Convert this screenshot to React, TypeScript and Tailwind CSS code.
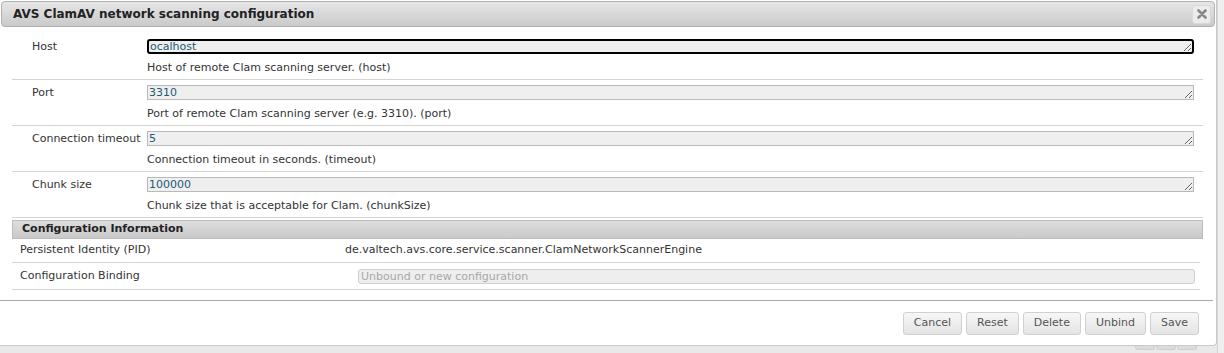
import React from "react";

interface FieldProps {
  label: string;
  value: string;
  description: string;
  focused?: boolean;
}

const fields: FieldProps[] = [
  { label: "Host", value: "localhost", description: "Host of remote Clam scanning server. (host)", focused: true },
  { label: "Port", value: "3310", description: "Port of remote Clam scanning server (e.g. 3310). (port)" },
  { label: "Connection timeout", value: "5", description: "Connection timeout in seconds. (timeout)" },
  { label: "Chunk size", value: "100000", description: "Chunk size that is acceptable for Clam. (chunkSize)" },
];

const FieldRow = ({ label, value, description, focused }: FieldProps) => {
  return (
    <div className="flex border-b border-[#d4d4d4] pt-[5px] pb-[4px]">
      <div className="w-[135px] shrink-0 pl-[20px] leading-[15px]">{label}</div>
      <div className="flex-1 pr-[9px]">
        <textarea
          readOnly
          rows={1}
          value={focused ? "ocalhost" : value}
          className={
            focused
              ? "block w-full h-[15px] rounded-[3px] border-2 border-black bg-[#efefef] px-[1px] text-[11px] leading-[11px] text-[#1d5a73] overflow-hidden resize"
              : "block w-full h-[15px] border border-[#b9b9b9] bg-[#efefef] px-[1px] text-[11px] leading-[13px] text-[#1d5a73] overflow-hidden resize"
          }
        />
        <div className="mt-[6px] leading-[15px]">{description}</div>
      </div>
    </div>
  );
};

const DialogButton = ({ label }: { label: string }) => (
  <button className="h-[23px] px-[10px] rounded-[3px] border border-[#d0d0d0] bg-gradient-to-b from-[#f7f7f7] to-[#e4e4e4] text-[#555] text-[11px]">
    {label}
  </button>
);

export default function App() {
  return (
    <div className="w-[1224px] h-[353px] overflow-hidden bg-[#e9e9e9] flex font-['DejaVu_Sans',Verdana,sans-serif] text-[11px] text-[#333]">
      <div className="w-[1217px] shrink-0 flex flex-col">
        {/* dialog */}
        <div className="h-[346px] bg-white border-r border-b border-[#c9c9c9] rounded-br-[4px] flex flex-col">
          {/* title bar */}
          <div className="mx-[1px] mt-[1px] h-[26px] rounded-[4px] border border-[#b1b1b1] bg-gradient-to-b from-[#e6e6e6] to-[#cacaca] flex items-center justify-between pl-[11px] pr-[3px]">
            <span className="font-bold text-[12px] text-[#222]">AVS ClamAV network scanning configuration</span>
            <span className="w-[19px] h-[19px] rounded-[3px] border border-[#d9d9d9] bg-[#ececec] flex items-center justify-center">
              <svg width="10" height="10" viewBox="0 0 10 10">
                <path d="M1.5 1.5 L8.5 8.5 M8.5 1.5 L1.5 8.5" stroke="#888" strokeWidth="2.6" strokeLinecap="round" />
              </svg>
            </span>
          </div>

          {/* form */}
          <div className="pl-[12px] pr-[3px] mt-[7px] flex-1">
            <div className="mr-[10px]">
              {fields.map((f) => (
                <FieldRow key={f.label} {...f} />
              ))}
            </div>

            {/* configuration information */}
            <div className="mt-[2px] h-[19px] border border-[#bdbdbd] bg-gradient-to-b from-[#dedede] to-[#c9c9c9] mr-[10px] pl-[9px] flex items-center font-bold text-[#222]">
              Configuration Information
            </div>
            <div className="mr-[13px]">
              <div className="flex items-center h-[24px] border-b border-[#d4d4d4] pl-[8px]">
                <div className="w-[325px] shrink-0">Persistent Identity (PID)</div>
                <div>de.valtech.avs.core.service.scanner.ClamNetworkScannerEngine</div>
              </div>
              <div className="flex items-center h-[27px] border-b border-[#d4d4d4] pl-[8px]">
                <div className="w-[338px] shrink-0">Configuration Binding</div>
                <div className="flex-1 mr-[5px] h-[15px] rounded-[3px] border border-[#cfcfcf] bg-[#eeeeee] px-[2px] leading-[13px] text-[#a8a8a8]">
                  Unbound or new configuration
                </div>
              </div>
            </div>
          </div>

          {/* footer */}
          <div className="h-[45px] border-t border-[#a9a9a9] mr-[3px] flex items-center justify-end gap-[4px] pr-[14px]">
            <DialogButton label="Cancel" />
            <DialogButton label="Reset" />
            <DialogButton label="Delete" />
            <DialogButton label="Unbind" />
            <DialogButton label="Save" />
          </div>
        </div>
        {/* page behind */}
        <div className="flex-1 flex justify-end gap-[1px] pr-[20px]">
          <div className="w-[20px] h-[4px] rounded-b-[3px] bg-[#dcdcdc] border border-t-0 border-[#cfcfcf]" />
          <div className="w-[20px] h-[4px] rounded-b-[3px] bg-[#dcdcdc] border border-t-0 border-[#cfcfcf]" />
          <div className="w-[20px] h-[4px] rounded-b-[3px] bg-[#dcdcdc] border border-t-0 border-[#cfcfcf]" />
        </div>
      </div>
      <div className="flex-1 bg-[#efefef] border-l border-[#d6d6d6]" />
    </div>
  );
}
